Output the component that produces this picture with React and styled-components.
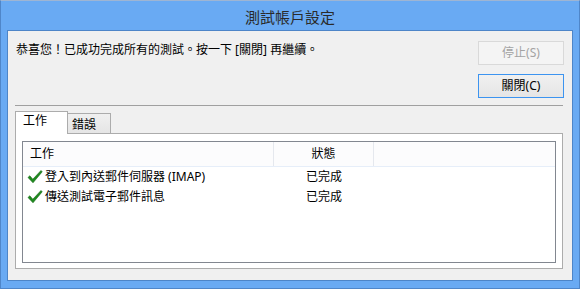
import React from "react";
import styled, { createGlobalStyle } from "styled-components";

const GlobalStyle = createGlobalStyle`
  html, body { margin: 0; padding: 0; background: #ffffff; }
  body { font-family: "Noto Sans CJK TC", "Noto Sans", sans-serif; }
  * { box-sizing: border-box; }
`;

const FONT = `"Noto Sans", "Noto Sans CJK TC", sans-serif`;

const Window = styled.div`
  width: 580px;
  height: 289px;
  border: 1px solid #4f86c9;
  border-top-color: #9eb5d3;
  background: #69aaf3;
  display: flex;
  flex-direction: column;
  padding: 0 6px 7px 6px;
`;

const TitleBar = styled.div`
  height: 29px;
  display: flex;
  align-items: center;
  justify-content: center;
  font-family: ${FONT};
  font-size: 15px;
  color: #2a2a2a;
  padding-top: 2px;
`;

const Client = styled.div`
  flex: 1;
  border: 1px solid #4d85c8;
  background: #f0f0f0;
  padding: 10px 9px 11px 7px;
  display: flex;
  flex-direction: column;
  min-height: 0;
`;

const TopRow = styled.div`
  display: flex;
  justify-content: space-between;
  align-items: flex-start;
  margin-right: -1px;
`;

const Message = styled.div`
  font-family: ${FONT};
  font-size: 12px;
  line-height: 16px;
  color: #000;
  padding-left: 1px;
  margin-top: 1px;
`;

const ButtonColumn = styled.div`
  display: flex;
  flex-direction: column;
  gap: 9px;
`;

const Button = styled.div`
  width: 86px;
  height: 24px;
  display: flex;
  align-items: center;
  justify-content: center;
  font-family: ${FONT};
  font-size: 12px;
  line-height: 16px;
  border: 1px solid ${(p) => (p.$disabled ? "#d9d9d9" : p.$focused ? "#3c94f0" : "#acacac")};
  background: ${(p) =>
    p.$disabled ? "#f4f4f4" : "linear-gradient(#f0f0f0, #e5e5e5)"};
  color: ${(p) => (p.$disabled ? "#a3a3a3" : "#000")};
`;

const Separator = styled.div`
  height: 1px;
  background: #a0a0a0;
  margin-top: 7px;
`;

const TabStrip = styled.div`
  display: flex;
  align-items: flex-end;
  height: 23px;
  margin-top: 5px;
  margin-bottom: -1px;
  position: relative;
  z-index: 1;
`;

const Tab = styled.div`
  font-family: ${FONT};
  font-size: 12px;
  line-height: 16px;
  color: #000;
  border: 1px solid #acacac;
  border-bottom: ${(p) => (p.$active ? "none" : "1px solid #acacac")};
  background: ${(p) => (p.$active ? "#ffffff" : "linear-gradient(#f0f0f0, #e5e5e5)")};
  width: ${(p) => (p.$active ? "53px" : "44px")};
  height: ${(p) => (p.$active ? "23px" : "21px")};
  padding-top: ${(p) => (p.$active ? "1px" : "3px")};
  padding-left: ${(p) => (p.$active ? "7px" : "4px")};
  margin-left: ${(p) => (p.$active ? "0" : "-1px")};
  position: relative;
  z-index: ${(p) => (p.$active ? 2 : 1)};
`;

const Panel = styled.div`
  flex: 1;
  border: 1px solid #acacac;
  background: #ffffff;
  padding: 7px 6px 5px 6px;
  display: flex;
  min-height: 0;
`;

const ListView = styled.div`
  flex: 1;
  border: 1px solid #828790;
  background: #ffffff;
  display: flex;
  flex-direction: column;
`;

const HeaderRow = styled.div`
  display: flex;
  height: 25px;
  border-bottom: 1px solid #e6eef9;
  background: #fcfcfd;
`;

const HeaderCell = styled.div`
  width: ${(p) => p.$w}px;
  display: flex;
  align-items: center;
  justify-content: ${(p) => (p.$center ? "center" : "flex-start")};
  padding-left: ${(p) => (p.$center ? "0" : "7px")};
  border-right: 1px solid #e5e8ee;
  font-family: ${FONT};
  font-size: 12px;
  line-height: 16px;
  color: #000;
`;

const Row = styled.div`
  display: flex;
  height: 20px;
  align-items: center;
`;

const Cell = styled.div`
  width: ${(p) => p.$w}px;
  display: flex;
  align-items: center;
  justify-content: ${(p) => (p.$center ? "center" : "flex-start")};
  padding-left: ${(p) => (p.$center ? "0" : "4px")};
  gap: 2px;
  font-family: ${FONT};
  font-size: 12px;
  line-height: 16px;
  color: #000;
  white-space: nowrap;
`;

const CheckIcon = () => (
  <svg width="16" height="16" viewBox="0 0 16 16">
    <polygon
      points="1,8.5 2.8,6.8 5.8,10.2 14,1.5 15.2,2.8 6,13.8"
      fill="#1e8a1e"
      stroke="#146614"
      strokeWidth="0.6"
      strokeLinejoin="round"
    />
  </svg>
);

const rows = [
  { task: "登入到內送郵件伺服器 (IMAP)", status: "已完成" },
  { task: "傳送測試電子郵件訊息", status: "已完成" },
];

export default function App() {
  return (
    <>
      <GlobalStyle />
      <Window>
        <TitleBar>測試帳戶設定</TitleBar>
        <Client>
          <TopRow>
            <Message>恭喜您！已成功完成所有的測試。按一下 [關閉] 再繼續。</Message>
            <ButtonColumn>
              <Button $disabled>停止(S)</Button>
              <Button $focused>關閉(C)</Button>
            </ButtonColumn>
          </TopRow>
          <Separator />
          <TabStrip>
            <Tab $active>工作</Tab>
            <Tab>錯誤</Tab>
          </TabStrip>
          <Panel>
            <ListView>
              <HeaderRow>
                <HeaderCell $w={251}>工作</HeaderCell>
                <HeaderCell $w={100} $center>
                  狀態
                </HeaderCell>
              </HeaderRow>
              {rows.map((r) => (
                <Row key={r.task}>
                  <Cell $w={251}>
                    <CheckIcon />
                    {r.task}
                  </Cell>
                  <Cell $w={100} $center>
                    {r.status}
                  </Cell>
                </Row>
              ))}
            </ListView>
          </Panel>
        </Client>
      </Window>
    </>
  );
}
